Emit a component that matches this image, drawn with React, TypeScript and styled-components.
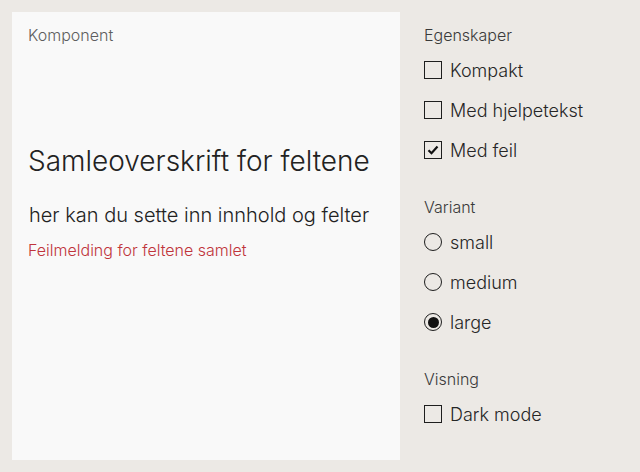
import React from "react";
import styled, { createGlobalStyle } from "styled-components";

const Global = createGlobalStyle`
  html, body { margin: 0; padding: 0; }
  body {
    background: #ece9e5;
    font-family: Inter, "Liberation Sans", sans-serif;
    font-weight: 300;
    color: #262626;
  }
`;

const Page = styled.div`
  display: grid;
  grid-template-columns: 388px 1fr;
  column-gap: 24px;
  padding: 12px;
  height: 472px;
  box-sizing: border-box;
`;

const Preview = styled.section`
  background: #f9f9f9;
  padding: 12px 16px;
  display: flex;
  flex-direction: column;
`;

const Caption = styled.div`
  font-size: 16px;
  line-height: 22px;
  color: #5e5e5e;
`;

const Fieldset = styled.div`
  margin-top: 97px;
  display: flex;
  flex-direction: column;
`;

const Legend = styled.h2`
  margin: 0;
  font-size: 28px;
  font-weight: 300;
  line-height: 36px;
  color: #222;
`;

const Body = styled.p`
  margin: 22px 0 0 1px;
  font-size: 20px;
  line-height: 28px;
  color: #222;
`;

const ErrorText = styled.p`
  margin: 10px 0 0;
  font-size: 16px;
  line-height: 22px;
  color: #c0343b;
`;

const Controls = styled.aside`
  padding-top: 12px;
  display: flex;
  flex-direction: column;
`;

const Group = styled.div<{ $gap?: number }>`
  display: flex;
  flex-direction: column;
  margin-bottom: ${(p) => p.$gap ?? 0}px;
`;

const GroupTitle = styled.div`
  font-size: 16px;
  line-height: 22px;
  color: #3a3a3a;
  margin-bottom: 4px;
`;

const Option = styled.label`
  display: flex;
  align-items: center;
  gap: 8px;
  height: 40px;
  font-size: 18px;
  color: #262626;
  cursor: pointer;
`;

const Box = styled.span`
  width: 18px;
  height: 18px;
  box-sizing: border-box;
  border: 1.5px solid #1e1e1e;
  display: flex;
  align-items: center;
  justify-content: center;
  flex-shrink: 0;
`;

const Radio = styled.span<{ $on?: boolean }>`
  width: 18px;
  height: 18px;
  box-sizing: border-box;
  border: 1.5px solid #1e1e1e;
  border-radius: 50%;
  display: flex;
  align-items: center;
  justify-content: center;
  flex-shrink: 0;
  &::after {
    content: "";
    display: ${(p) => (p.$on ? "block" : "none")};
    width: 11px;
    height: 11px;
    border-radius: 50%;
    background: #111;
  }
`;

function Check({ label, checked }: { label: string; checked?: boolean }) {
  return (
    <Option>
      <Box>
        {checked && (
          <svg width="12" height="10" viewBox="0 0 12 10">
            <path d="M1.5 5.2 L4.5 8.2 L10.5 1.5" fill="none" stroke="#111" strokeWidth="2.2" />
          </svg>
        )}
      </Box>
      {label}
    </Option>
  );
}

function RadioOption({ label, on }: { label: string; on?: boolean }) {
  return (
    <Option>
      <Radio $on={on} />
      {label}
    </Option>
  );
}

export default function App() {
  return (
    <>
      <Global />
      <Page>
        <Preview>
          <Caption>Komponent</Caption>
          <Fieldset>
            <Legend>Samleoverskrift for feltene</Legend>
            <Body>her kan du sette inn innhold og felter</Body>
            <ErrorText>Feilmelding for feltene samlet</ErrorText>
          </Fieldset>
        </Preview>
        <Controls>
          <Group $gap={26}>
            <GroupTitle>Egenskaper</GroupTitle>
            <Check label="Kompakt" />
            <Check label="Med hjelpetekst" />
            <Check label="Med feil" checked />
          </Group>
          <Group $gap={26}>
            <GroupTitle>Variant</GroupTitle>
            <RadioOption label="small" />
            <RadioOption label="medium" />
            <RadioOption label="large" on />
          </Group>
          <Group>
            <GroupTitle>Visning</GroupTitle>
            <Check label="Dark mode" />
          </Group>
        </Controls>
      </Page>
    </>
  );
}
